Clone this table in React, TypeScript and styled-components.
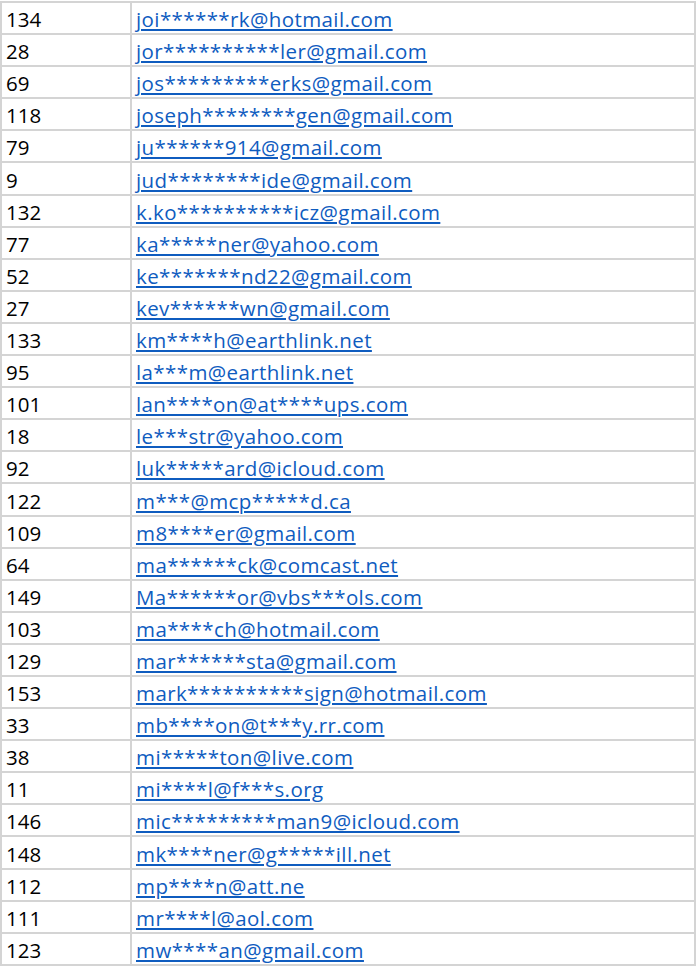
import { FC } from 'react';
import styled, { createGlobalStyle } from 'styled-components';

const GlobalStyle = createGlobalStyle`
  html, body {
    margin: 0;
    padding: 0;
    background: #fff;
  }
`;

const rows: [number, string][] = [
  [134, 'joi******rk@hotmail.com'],
  [28, 'jor**********ler@gmail.com'],
  [69, 'jos*********erks@gmail.com'],
  [118, 'joseph********gen@gmail.com'],
  [79, 'ju******914@gmail.com'],
  [9, 'jud********ide@gmail.com'],
  [132, 'k.ko**********icz@gmail.com'],
  [77, 'ka*****ner@yahoo.com'],
  [52, 'ke*******nd22@gmail.com'],
  [27, 'kev******wn@gmail.com'],
  [133, 'km****h@earthlink.net'],
  [95, 'la***m@earthlink.net'],
  [101, 'lan****on@at****ups.com'],
  [18, 'le***str@yahoo.com'],
  [92, 'luk*****ard@icloud.com'],
  [122, 'm***@mcp*****d.ca'],
  [109, 'm8****er@gmail.com'],
  [64, 'ma******ck@comcast.net'],
  [149, 'Ma******or@vbs***ols.com'],
  [103, 'ma****ch@hotmail.com'],
  [129, 'mar******sta@gmail.com'],
  [153, 'mark**********sign@hotmail.com'],
  [33, 'mb****on@t***y.rr.com'],
  [38, 'mi*****ton@live.com'],
  [11, 'mi****l@f***s.org'],
  [146, 'mic*********man9@icloud.com'],
  [148, 'mk****ner@g*****ill.net'],
  [112, 'mp****n@att.ne'],
  [111, 'mr****l@aol.com'],
  [123, 'mw****an@gmail.com'],
];

const Sheet = styled.div`
  margin-top: 1px;
  width: 696px;
  box-sizing: border-box;
  border-top: 2px solid #d4d4d4;
  border-left: 2px solid #d4d4d4;
  border-right: 2px solid #d4d4d4;
  font-family: 'Open Sans', 'Liberation Sans', sans-serif;
  font-size: 20.5px;
`;

const Row = styled.div`
  display: grid;
  grid-template-columns: 130px 1fr;
  height: 32.1px;
  box-sizing: border-box;
  border-bottom: 2px solid #d4d4d4;
`;

const NumCell = styled.div`
  display: flex;
  align-items: flex-end;
  padding: 0 0 0 4px;
  border-right: 2px solid #d4d4d4;
  color: #000;
  white-space: nowrap;
`;

const LinkCell = styled.div`
  display: flex;
  align-items: flex-end;
  padding: 0 0 0 4px;
  overflow: hidden;
  white-space: nowrap;
`;

const Link = styled.a`
  color: #0f5cbf;
  letter-spacing: 0.4px;
  text-decoration: underline;
  text-decoration-thickness: 2px;
  text-underline-offset: 2px;
`;

const App: FC = () => (
  <>
    <GlobalStyle />
    <Sheet>
      {rows.map(([num, email]) => (
        <Row key={email}>
          <NumCell>{num}</NumCell>
          <LinkCell>
            <Link href="#">{email}</Link>
          </LinkCell>
        </Row>
      ))}
    </Sheet>
  </>
);

export default App;
